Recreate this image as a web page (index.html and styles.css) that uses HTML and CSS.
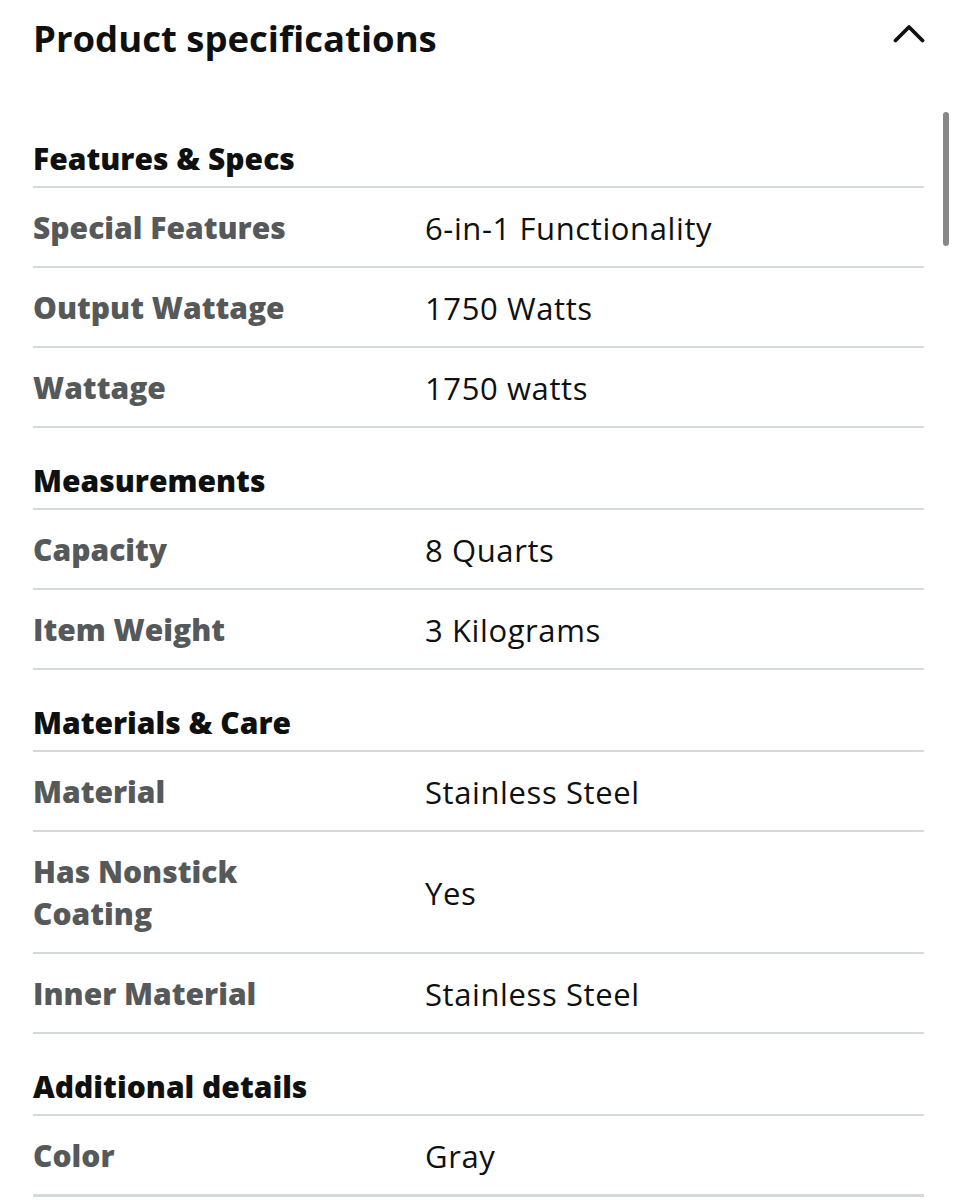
FILE: index.html
```html
<!DOCTYPE html>
<html lang="en">
<head>
<meta charset="utf-8">
<title>Product specifications</title>
<link rel="stylesheet" href="styles.css">
</head>
<body>
<div class="page">
  <header class="top">
    <h1 class="title">Product specifications</h1>
    <svg class="chevron" width="32" height="20" viewBox="0 0 32 20" aria-hidden="true">
      <path d="M2.5 17.5 L16 4 L29.5 17.5" fill="none" stroke="#0f1111" stroke-width="3.8" stroke-linecap="round" stroke-linejoin="round"/>
    </svg>
  </header>

  <section class="group">
    <h2 class="group-title">Features &amp; Specs</h2>
    <div class="row"><div class="label">Special Features</div><div class="value">6-in-1 Functionality</div></div>
    <div class="row"><div class="label">Output Wattage</div><div class="value">1750 Watts</div></div>
    <div class="row"><div class="label">Wattage</div><div class="value">1750 watts</div></div>
  </section>

  <section class="group">
    <h2 class="group-title">Measurements</h2>
    <div class="row"><div class="label">Capacity</div><div class="value">8 Quarts</div></div>
    <div class="row"><div class="label">Item Weight</div><div class="value">3 Kilograms</div></div>
  </section>

  <section class="group">
    <h2 class="group-title">Materials &amp; Care</h2>
    <div class="row"><div class="label">Material</div><div class="value">Stainless Steel</div></div>
    <div class="row"><div class="label">Has Nonstick<br>Coating</div><div class="value">Yes</div></div>
    <div class="row"><div class="label">Inner Material</div><div class="value">Stainless Steel</div></div>
  </section>

  <section class="group">
    <h2 class="group-title">Additional details</h2>
    <div class="row row-last"><div class="label">Color</div><div class="value">Gray</div></div>
  </section>
</div>
<div class="scrollbar"></div>
</body>
</html>
```

FILE: styles.css
```css
html, body {
  margin: 0;
  padding: 0;
  background: #ffffff;
}

body {
  font-family: "Open Sans", "Noto Sans", "Liberation Sans", sans-serif;
  color: #0f1111;
  overflow: hidden;
}

.page {
  padding: 0 33px;
}

.top {
  display: flex;
  justify-content: space-between;
  align-items: flex-start;
  height: 76px;
  margin-bottom: 31px;
}

.title {
  margin: 0;
  padding-top: 14px;
  font-size: 36.5px;
  line-height: 48px;
  font-weight: 700;
  color: #0f1111;
}

.chevron {
  margin-top: 23px;
  margin-right: -1px;
}

.group {
  display: flex;
  flex-direction: column;
}

.group-title {
  margin: 0;
  padding: 32px 0 6px;
  font-size: 30px;
  line-height: 42px;
  font-weight: 800;
  color: #0f1111;
  border-bottom: 2px solid #d5d9d9;
}

.group:first-of-type .group-title {
  padding-top: 31px;
}

.row {
  display: grid;
  grid-template-columns: 392px 1fr;
  align-items: center;
  padding: 19px 0 17px;
  border-bottom: 2px solid #d5d9d9;
}

.row-last {
  border-bottom-width: 3px;
}

.label {
  font-size: 30px;
  line-height: 42px;
  font-weight: 800;
  color: #565959;
}

.value {
  font-size: 31px;
  line-height: 42px;
  font-weight: 400;
  letter-spacing: 0.6px;
  color: #0f1111;
}

.scrollbar {
  position: absolute;
  top: 112px;
  left: 943px;
  width: 6px;
  height: 134px;
  border-radius: 3px;
  background: #888888;
}
```
